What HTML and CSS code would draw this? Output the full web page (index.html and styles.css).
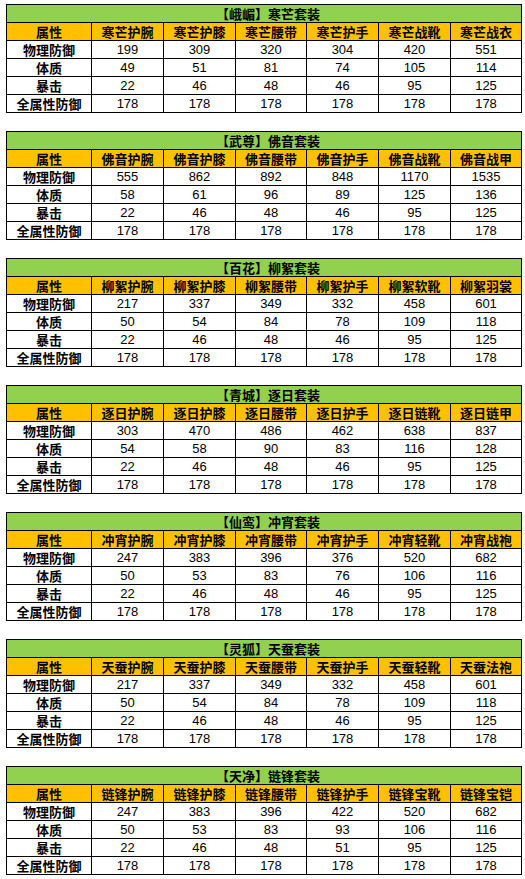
FILE: index.html
```html
<!DOCTYPE html>
<html lang="zh-CN">
<head>
<meta charset="utf-8">
<link rel="stylesheet" href="styles.css">
</head>
<body>
<div class="page">
  <table class="suit">
    <colgroup><col class="c0"><col class="c1"><col class="c2"><col class="c3"><col class="c4"><col class="c5"><col class="c6"></colgroup>
    <tr><td class="title" colspan="7">【峨嵋】寒芒套装</td></tr>
    <tr class="head"><th>属性</th><th>寒芒护腕</th><th>寒芒护膝</th><th>寒芒腰带</th><th>寒芒护手</th><th>寒芒战靴</th><th>寒芒战衣</th></tr>
    <tr><th class="attr">物理防御</th><td>199</td><td>309</td><td>320</td><td>304</td><td>420</td><td>551</td></tr>
    <tr><th class="attr">体质</th><td>49</td><td>51</td><td>81</td><td>74</td><td>105</td><td>114</td></tr>
    <tr><th class="attr">暴击</th><td>22</td><td>46</td><td>48</td><td>46</td><td>95</td><td>125</td></tr>
    <tr><th class="attr">全属性防御</th><td>178</td><td>178</td><td>178</td><td>178</td><td>178</td><td>178</td></tr>
  </table>

  <table class="suit">
    <colgroup><col class="c0"><col class="c1"><col class="c2"><col class="c3"><col class="c4"><col class="c5"><col class="c6"></colgroup>
    <tr><td class="title" colspan="7">【武尊】佛音套装</td></tr>
    <tr class="head"><th>属性</th><th>佛音护腕</th><th>佛音护膝</th><th>佛音腰带</th><th>佛音护手</th><th>佛音战靴</th><th>佛音战甲</th></tr>
    <tr><th class="attr">物理防御</th><td>555</td><td>862</td><td>892</td><td>848</td><td>1170</td><td>1535</td></tr>
    <tr><th class="attr">体质</th><td>58</td><td>61</td><td>96</td><td>89</td><td>125</td><td>136</td></tr>
    <tr><th class="attr">暴击</th><td>22</td><td>46</td><td>48</td><td>46</td><td>95</td><td>125</td></tr>
    <tr><th class="attr">全属性防御</th><td>178</td><td>178</td><td>178</td><td>178</td><td>178</td><td>178</td></tr>
  </table>

  <table class="suit">
    <colgroup><col class="c0"><col class="c1"><col class="c2"><col class="c3"><col class="c4"><col class="c5"><col class="c6"></colgroup>
    <tr><td class="title" colspan="7">【百花】柳絮套装</td></tr>
    <tr class="head"><th>属性</th><th>柳絮护腕</th><th>柳絮护膝</th><th>柳絮腰带</th><th>柳絮护手</th><th>柳絮软靴</th><th>柳絮羽裳</th></tr>
    <tr><th class="attr">物理防御</th><td>217</td><td>337</td><td>349</td><td>332</td><td>458</td><td>601</td></tr>
    <tr><th class="attr">体质</th><td>50</td><td>54</td><td>84</td><td>78</td><td>109</td><td>118</td></tr>
    <tr><th class="attr">暴击</th><td>22</td><td>46</td><td>48</td><td>46</td><td>95</td><td>125</td></tr>
    <tr><th class="attr">全属性防御</th><td>178</td><td>178</td><td>178</td><td>178</td><td>178</td><td>178</td></tr>
  </table>

  <table class="suit">
    <colgroup><col class="c0"><col class="c1"><col class="c2"><col class="c3"><col class="c4"><col class="c5"><col class="c6"></colgroup>
    <tr><td class="title" colspan="7">【青城】逐日套装</td></tr>
    <tr class="head"><th>属性</th><th>逐日护腕</th><th>逐日护膝</th><th>逐日腰带</th><th>逐日护手</th><th>逐日链靴</th><th>逐日链甲</th></tr>
    <tr><th class="attr">物理防御</th><td>303</td><td>470</td><td>486</td><td>462</td><td>638</td><td>837</td></tr>
    <tr><th class="attr">体质</th><td>54</td><td>58</td><td>90</td><td>83</td><td>116</td><td>128</td></tr>
    <tr><th class="attr">暴击</th><td>22</td><td>46</td><td>48</td><td>46</td><td>95</td><td>125</td></tr>
    <tr><th class="attr">全属性防御</th><td>178</td><td>178</td><td>178</td><td>178</td><td>178</td><td>178</td></tr>
  </table>

  <table class="suit">
    <colgroup><col class="c0"><col class="c1"><col class="c2"><col class="c3"><col class="c4"><col class="c5"><col class="c6"></colgroup>
    <tr><td class="title" colspan="7">【仙鸾】冲宵套装</td></tr>
    <tr class="head"><th>属性</th><th>冲宵护腕</th><th>冲宵护膝</th><th>冲宵腰带</th><th>冲宵护手</th><th>冲宵轻靴</th><th>冲宵战袍</th></tr>
    <tr><th class="attr">物理防御</th><td>247</td><td>383</td><td>396</td><td>376</td><td>520</td><td>682</td></tr>
    <tr><th class="attr">体质</th><td>50</td><td>53</td><td>83</td><td>76</td><td>106</td><td>116</td></tr>
    <tr><th class="attr">暴击</th><td>22</td><td>46</td><td>48</td><td>46</td><td>95</td><td>125</td></tr>
    <tr><th class="attr">全属性防御</th><td>178</td><td>178</td><td>178</td><td>178</td><td>178</td><td>178</td></tr>
  </table>

  <table class="suit">
    <colgroup><col class="c0"><col class="c1"><col class="c2"><col class="c3"><col class="c4"><col class="c5"><col class="c6"></colgroup>
    <tr><td class="title" colspan="7">【灵狐】天蚕套装</td></tr>
    <tr class="head"><th>属性</th><th>天蚕护腕</th><th>天蚕护膝</th><th>天蚕腰带</th><th>天蚕护手</th><th>天蚕轻靴</th><th>天蚕法袍</th></tr>
    <tr><th class="attr">物理防御</th><td>217</td><td>337</td><td>349</td><td>332</td><td>458</td><td>601</td></tr>
    <tr><th class="attr">体质</th><td>50</td><td>54</td><td>84</td><td>78</td><td>109</td><td>118</td></tr>
    <tr><th class="attr">暴击</th><td>22</td><td>46</td><td>48</td><td>46</td><td>95</td><td>125</td></tr>
    <tr><th class="attr">全属性防御</th><td>178</td><td>178</td><td>178</td><td>178</td><td>178</td><td>178</td></tr>
  </table>

  <table class="suit">
    <colgroup><col class="c0"><col class="c1"><col class="c2"><col class="c3"><col class="c4"><col class="c5"><col class="c6"></colgroup>
    <tr><td class="title" colspan="7">【天净】链锋套装</td></tr>
    <tr class="head"><th>属性</th><th>链锋护腕</th><th>链锋护膝</th><th>链锋腰带</th><th>链锋护手</th><th>链锋宝靴</th><th>链锋宝铠</th></tr>
    <tr><th class="attr">物理防御</th><td>247</td><td>383</td><td>396</td><td>422</td><td>520</td><td>682</td></tr>
    <tr><th class="attr">体质</th><td>50</td><td>53</td><td>83</td><td>93</td><td>106</td><td>116</td></tr>
    <tr><th class="attr">暴击</th><td>22</td><td>46</td><td>48</td><td>51</td><td>95</td><td>125</td></tr>
    <tr><th class="attr">全属性防御</th><td>178</td><td>178</td><td>178</td><td>178</td><td>178</td><td>178</td></tr>
  </table>
</div>
</body>
</html>
```

FILE: styles.css
```css
html, body {
  margin: 0;
  padding: 0;
  background: #ffffff;
}

.page {
  padding: 4px 0 0 6px;
}

.suit {
  border-collapse: separate;
  border-spacing: 0;
  table-layout: fixed;
  width: 516px;
  border-top: 1px solid #000;
  border-left: 1px solid #000;
  margin: 0 0 18px 0;
  font-family: "Noto Sans CJK SC", "Liberation Sans", sans-serif;
  font-size: 13px;
  color: #000;
}

.c0 { width: 85px; }
.c1 { width: 72px; }
.c2 { width: 72px; }
.c3 { width: 71px; }
.c4 { width: 72px; }
.c5 { width: 72px; }
.c6 { width: 71px; }

.suit td,
.suit th {
  box-sizing: border-box;
  height: 18px;
  padding: 0;
  border-right: 1px solid #000;
  border-bottom: 1px solid #000;
  text-align: center;
  vertical-align: middle;
  line-height: 17px;
  white-space: nowrap;
  overflow: hidden;
}

.suit td {
  font-family: "Liberation Sans", "Noto Sans CJK SC", sans-serif;
  font-weight: normal;
  font-size: 13px;
}

.suit .title {
  background: #92d050;
  font-family: "Noto Sans CJK SC", sans-serif;
  font-weight: bold;
  text-align: center;
  padding-left: 8px;
}

.head th {
  background: #ffc000;
  font-weight: bold;
}

.suit .attr {
  font-weight: bold;
  background: #ffffff;
}
```
